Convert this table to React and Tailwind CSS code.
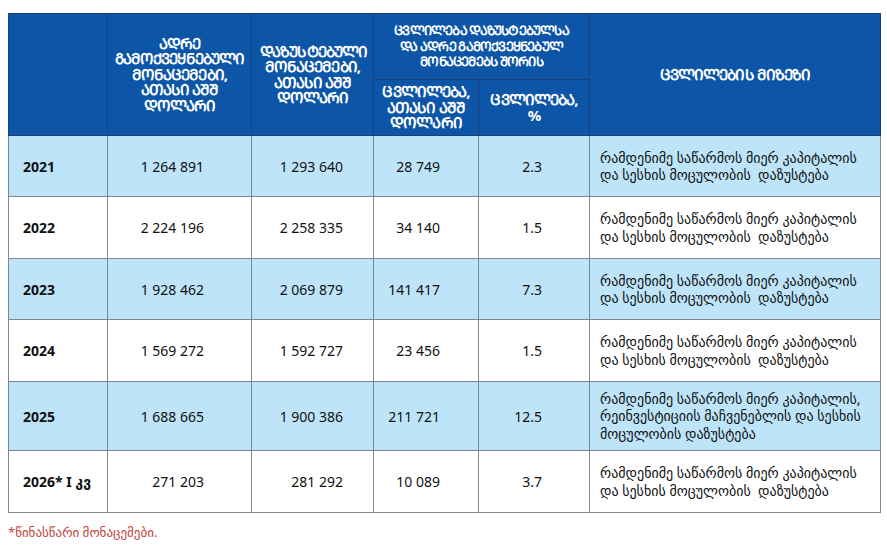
import React from 'react';

// Mkhedruli -> Mtavruli (Georgian capitals) for the header cells
const caps = (s) =>
    Array.from(s)
        .map((ch) => {
            const c = ch.codePointAt(0);
            return c >= 0x10d0 && c <= 0x10fa ? String.fromCodePoint(c - 0x10d0 + 0x1c90) : ch;
        })
        .join('');

const REASON = 'რამდენიმე საწარმოს მიერ კაპიტალის და სესხის მოცულობის  დაზუსტება';

const rows = [
    { year: '2021', prev: '1 264 891', rev: '1 293 640', diff: '28 749', pct: '2.3', reason: REASON, blue: true, h: 'h-[61px]' },
    { year: '2022', prev: '2 224 196', rev: '2 258 335', diff: '34 140', pct: '1.5', reason: REASON, blue: false, h: 'h-[62px]' },
    { year: '2023', prev: '1 928 462', rev: '2 069 879', diff: '141 417', pct: '7.3', reason: REASON, blue: true, h: 'h-[61px]' },
    { year: '2024', prev: '1 569 272', rev: '1 592 727', diff: '23 456', pct: '1.5', reason: REASON, blue: false, h: 'h-[62px]' },
    {
        year: '2025',
        prev: '1 688 665',
        rev: '1 900 386',
        diff: '211 721',
        pct: '12.5',
        reason: 'რამდენიმე საწარმოს მიერ კაპიტალის, რეინვესტიციის მაჩვენებლის და სესხის მოცულობის დაზუსტება',
        blue: true,
        h: 'h-[69px]',
    },
    { year: '2026* I კვ', prev: '271 203', rev: '281 292', diff: '10 089', pct: '3.7', reason: REASON, blue: false, h: 'h-[62px]' },
];

const th = 'border border-[#1d3f73] text-white font-bold leading-[15.5px] text-center align-middle';
const big = 'text-[15px] tracking-[-0.9px]';
const td = 'border border-[#7d8792] align-middle text-[14px] text-[#111]';

export default function App() {
    return (
        <div className="w-[887px] h-[547px] bg-white pt-[13px] pl-[8px] font-['Noto_Sans','DejaVu_Sans',sans-serif]">
            <table className="w-[872px] border-collapse table-fixed">
                <colgroup>
                    <col className="w-[99px]" />
                    <col className="w-[144px]" />
                    <col className="w-[122px]" />
                    <col className="w-[105px]" />
                    <col className="w-[111px]" />
                    <col className="w-[291px]" />
                </colgroup>
                <thead className="bg-[#0c55a7]">
                    <tr className="h-[66px]">
                        <th rowSpan={2} className={th}></th>
                        <th rowSpan={2} className={`${th} ${big} px-1`}>
                            {caps('ადრე გამოქვეყნებული მონაცემები, ათასი აშშ დოლარი')}
                        </th>
                        <th rowSpan={2} className={`${th} ${big} px-2`}>
                            {caps('დაზუსტებული მონაცემები, ათასი აშშ დოლარი')}
                        </th>
                        <th colSpan={2} className={`${th} text-[13px] tracking-[-0.8px] px-[15px]`}>
                            {caps('ცვლილება დაზუსტებულსა და ადრე გამოქვეყნებულ მონაცემებს შორის')}
                        </th>
                        <th rowSpan={2} className={`${th} ${big}`}>
                            {caps('ცვლილების მიზეზი')}
                        </th>
                    </tr>
                    <tr className="h-[56px]">
                        <th className={`${th} ${big} px-1`}>{caps('ცვლილება, ათასი აშშ დოლარი')}</th>
                        <th className={`${th} ${big} px-2`}>{caps('ცვლილება, %')}</th>
                    </tr>
                </thead>
                <tbody>
                    {rows.map((r) => (
                        <tr key={r.year} className={`${r.h} ${r.blue ? 'bg-[#bde4f8]' : 'bg-white'}`}>
                            <td className={`${td} pl-[14px] font-bold`}>{r.year}</td>
                            <td className={`${td} text-right pr-[47px]`}>{r.prev}</td>
                            <td className={`${td} text-right pr-[30px]`}>{r.rev}</td>
                            <td className={`${td} text-right pr-[38px]`}>{r.diff}</td>
                            <td className={`${td} text-right pr-[47px]`}>{r.pct}</td>
                            <td className={`${td} pl-[10px] pr-2 text-[13px] leading-[17.5px] whitespace-pre-wrap`}>
                                {r.reason}
                            </td>
                        </tr>
                    ))}
                </tbody>
            </table>
            <p className="mt-[10px] text-[13px] text-[#c2453d]">*წინასწარი მონაცემები.</p>
        </div>
    );
}
